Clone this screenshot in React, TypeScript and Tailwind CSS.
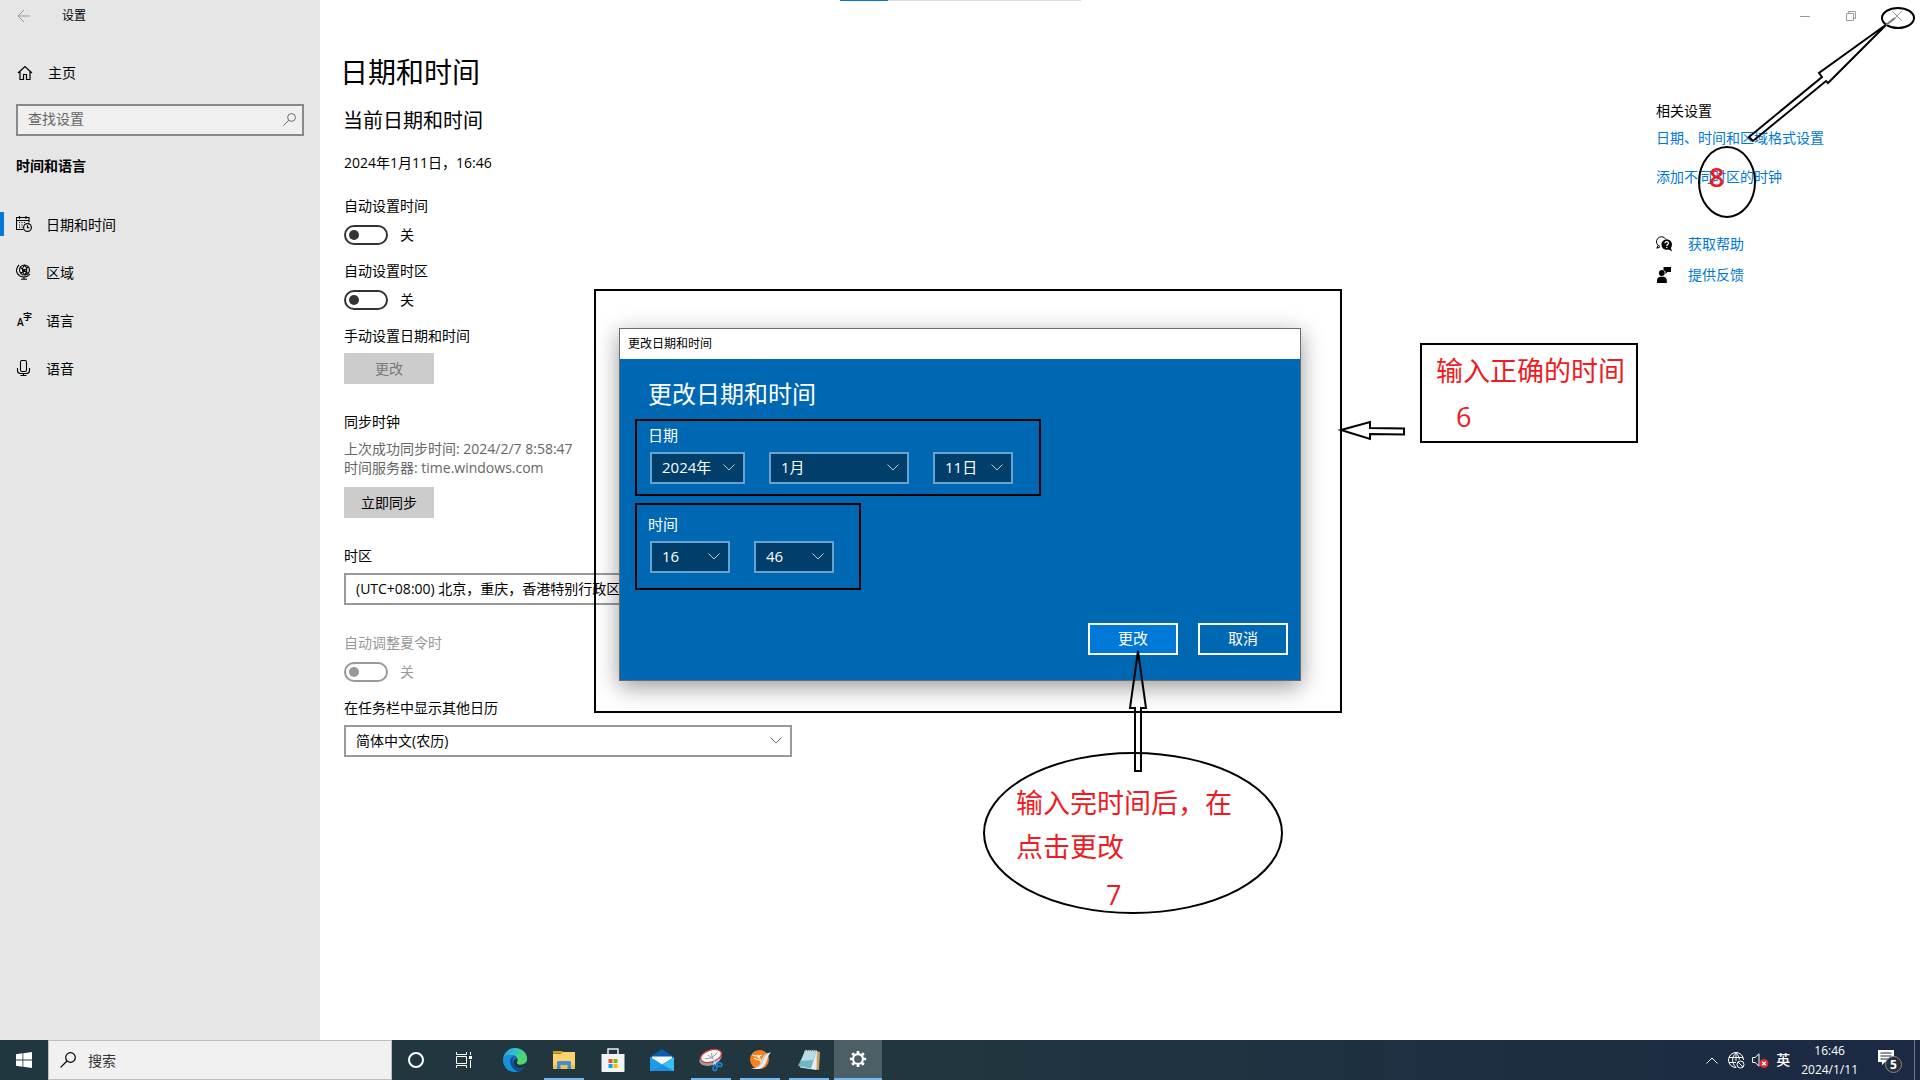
import type { ReactNode } from 'react'

interface IconProps {
  className?: string
}

const navItems = [
  { label: '日期和时间', icon: CalendarClockIcon, active: true },
  { label: '区域', icon: GlobeStandIcon, active: false },
  { label: '语言', icon: LanguageIcon, active: false },
  { label: '语音', icon: MicIcon, active: false },
]

const taskbarApps = [
  { name: 'Microsoft Edge', icon: EdgeIcon, open: false },
  { name: '文件资源管理器', icon: ExplorerIcon, open: true },
  { name: 'Microsoft Store', icon: StoreIcon, open: false },
  { name: '邮件', icon: MailIcon, open: false },
  { name: '截图工具', icon: SnipIcon, open: true },
  { name: '浏览器', icon: BirdIcon, open: true },
  { name: '记事本', icon: NotepadIcon, open: true },
]

/* Settings icons */

function BackIcon({ className }: IconProps) {
  return (
    <svg className={className} viewBox="0 0 14 14" fill="none" stroke="currentColor">
      <path d="M7 1 1 7l6 6M1 7h12" />
    </svg>
  )
}

function HomeIcon({ className }: IconProps) {
  return (
    <svg className={className} viewBox="0 0 16 16" fill="none" stroke="currentColor" strokeWidth="1.2">
      <path d="M1 8 8 1.5 15 8M3 6.5v8h3.5V9.5h3v5H13v-8" />
    </svg>
  )
}

function SearchIcon({ className }: IconProps) {
  return (
    <svg className={className} viewBox="0 0 16 16" fill="none" stroke="currentColor" strokeWidth="1.2">
      <circle cx="10.5" cy="5.5" r="4.8" />
      <path d="M7 9 .6 15.4" />
    </svg>
  )
}

function CalendarClockIcon({ className }: IconProps) {
  return (
    <svg className={className} viewBox="0 0 16 16" fill="none" stroke="currentColor" strokeWidth="1.1">
      <path d="M7.5 13.5h-7v-12h12.5v5M.5 4.5h12.5M3.5 0v3M10 0v3" />
      <path d="M3 6.5h1M5.5 6.5h1M8 6.5h1M3 9h1M5.5 9h1M3 11.3h1M5.5 11.3h1" />
      <circle cx="11.5" cy="11.5" r="3.9" />
      <path d="M11.5 9.2v2.5h2" />
    </svg>
  )
}

function GlobeStandIcon({ className }: IconProps) {
  return (
    <svg className={className} viewBox="0 0 16 16" fill="none" stroke="currentColor" strokeWidth="1.1">
      <circle cx="8.5" cy="6" r="5" />
      <path d="M4.500 3.500 12 9.500M5 9l7-6M8.500 1.200C5.500 4 6 9 9 10.800M8.500 1.200c3 2.500 3 7 .5 9.600" />
      <path d="M3 .8C-.6 5-.3 9 3.500 11.800c3.500 2 7.500 1.500 10.500-1.600M8 13v2M5 15.300h6" />
    </svg>
  )
}

function LanguageIcon({ className }: IconProps) {
  return (
    <svg className={className} viewBox="0 0 16 16" fill="currentColor">
      <text x="1" y="14" fontSize="10" fontWeight="600" fontFamily="Open Sans">A</text>
      <text x="7" y="8" fontSize="9" fontWeight="700" fontFamily="Noto Sans CJK SC">字</text>
    </svg>
  )
}

function MicIcon({ className }: IconProps) {
  return (
    <svg className={className} viewBox="0 0 16 16" fill="none" stroke="currentColor" strokeWidth="1.1">
      <rect x="4.5" y=".5" width="6" height="11" rx="1.5" />
      <path d="M1.5 8v2.5c0 2 1.500 3 3 3h6c1.500 0 3-1 3-3V8M7.500 13.500v2M4.500 15.500h6" />
    </svg>
  )
}

function HelpIcon({ className }: IconProps) {
  return (
    <svg className={className} viewBox="0 0 16 16">
      <path d="M2 9.500.8 12.200l3-1M4 10.500A5 5 0 1 1 9.800 3.200" fill="none" stroke="black" />
      <circle cx="10.700" cy="8.500" r="5.300" />
      <path d="m12 13 4 2.500-1.500-4.500z" />
      <path d="M9 7.300c0-2.300 3.500-2.200 3.500 0 0 1.300-1.700 1.200-1.700 2.600M10.800 10.800v1.200" fill="none" stroke="white" strokeWidth="1.2" />
    </svg>
  )
}

function FeedbackIcon({ className }: IconProps) {
  return (
    <svg className={className} viewBox="0 0 16 16">
      <circle cx="5.8" cy="6" r="2.9" />
      <path d="M1 16v-2.500C1 11 2.500 9.700 4.500 9.700h2.800c2 0 3.500 1.300 3.500 3.800V16zM7.500 0H15v5h-3.500L9.500 7V4.500L7.500 3z" />
    </svg>
  )
}

function ChevronDown({ className }: IconProps) {
  return (
    <svg className={className} viewBox="0 0 12 7" fill="none" stroke="currentColor">
      <path d="m.5.5 5.500 5.500L11.500.5" />
    </svg>
  )
}

/* Taskbar icons */

function WindowsIcon({ className }: IconProps) {
  return (
    <svg className={className} viewBox="0 0 16 16" fill="white">
      <path d="M0 2.200 6.500 1.300v6.300H0zM7.300 1.200 16 0v7.600H7.300zM0 8.400h6.500v6.300L0 13.800zM7.300 8.400H16V16l-8.700-1.200z" />
    </svg>
  )
}

function TaskViewIcon({ className }: IconProps) {
  return (
    <svg className={className} viewBox="0 0 16 16" fill="none" stroke="white">
      <path d="M.5 4.500h10v7H.5zM.5 0v2.500h10V0M.5 16v-2.500h10V16M14.500 0v3M14.500 8v8" />
      <path d="M13 4h3v3h-3z" fill="white" stroke="none" />
    </svg>
  )
}

function EdgeIcon({ className }: IconProps) {
  return (
    <svg className={className} viewBox="0 0 24 24">
      <defs>
        <linearGradient id="edge-top" x1="0" y1="0.5" x2="1" y2="0.6">
          <stop offset="0" stopColor="#2aa5e0" />
          <stop offset=".5" stopColor="#2fc3c4" />
          <stop offset="1" stopColor="#5cd957" />
        </linearGradient>
      </defs>
      <circle cx="12" cy="12" r="12" fill="#1273c4" />
      <path d="M.3 10C1.500 4 6.500 0 12 0c7 0 12 5.200 12 10.500 0 3.700-3 6-6.200 6-2.600 0-4-1-4-1.800 0-.8 1-1 1-3C14.800 9 12 7 8.500 7 4.500 7 1.500 8.500.3 10z" fill="url(#edge-top)" />
      <path d="M.3 10C2 8 5 7 8.500 7c1.500 0 2.800.3 3.800.9C8 8 6.500 12 7.500 15.500 8.500 19.500 12 22.500 15.500 23.500 6 26-1 18.500.3 10z" fill="#1b8fd8" />
      <path d="M12.300 7.900c-3 1.600-3.600 5.300-2 8.600 2 4 7 5.500 12 2.200-1.500 2.800-4 4.500-6.800 4.900-4-1-7-4-8-8C6.600 12 8 8 12.300 7.900z" fill="#0c4f96" />
      <path d="M14.800 11.700c0 2-1 2.200-1 3 0 .8 1.400 1.800 4 1.800 2.600 0 4.800-1.300 5.700-3.400L24 19l-3 .5c-5 2-9.500.5-10.500-4-.5-3 1.500-5.500 3.500-5.300z" fill="#213740" />
      <path d="M14.800 11.700c0 2-1 2.200-1 3 0 .8 1.400 1.800 4 1.800 2.600 0 4.800-1.300 5.700-3.400.7-2 .5-4-.2-5.600l-6-1-4 1.700c1 .8 1.500 2 1.500 3.500z" fill="#4fd673" />
    </svg>
  )
}

function ExplorerIcon({ className }: IconProps) {
  return (
    <svg className={className} viewBox="0 0 24 24">
      <path d="M1 3h9l1.500 2H1z" fill="#d99b12" />
      <path d="M1 5.500h8L11 4h12v17H1z" fill="#fdd36b" />
      <path d="M1 17h22v4H1z" fill="#f5bf45" />
      <path d="M5 21v-7l1-1h12l1 1v7h-3.500v-4h-7v4z" fill="#3f8fd6" />
    </svg>
  )
}

function StoreIcon({ className }: IconProps) {
  return (
    <svg className={className} viewBox="0 0 24 24">
      <path d="M7 7V1h10v6" fill="none" stroke="#eeeeee" strokeWidth="1.5" />
      <path d="M.5 6h23v17a1 1 0 0 1-1 1h-21a1 1 0 0 1-1-1z" fill="#f3f3f3" />
      <path d="M7.500 11h4v4h-4z" fill="#f25022" />
      <path d="M12.500 11h4v4h-4z" fill="#7fba00" />
      <path d="M7.500 16h4v4h-4z" fill="#00a4ef" />
      <path d="M12.500 16h4v4h-4z" fill="#ffb900" />
    </svg>
  )
}

function MailIcon({ className }: IconProps) {
  return (
    <svg className={className} viewBox="0 0 24 24">
      <path d="M0 9 12 1l12 8v4H0z" fill="#0a5cae" />
      <path d="M2 8.500h20v6l-10 4-10-4z" fill="#f4f6f8" />
      <path d="M0 9v14h24V9l-12 7.500z" fill="#2fb5f3" />
      <path d="M0 9v14h1L12 16.500z" fill="#1d9be6" />
      <path d="M24 23H1l11-6.500L24 9z" fill="#35bff5" />
      <path d="m12 16.500 12 6.500H1z" fill="#1c8fe0" />
    </svg>
  )
}

function SnipIcon({ className }: IconProps) {
  return (
    <svg className={className} viewBox="0 0 24 24">
      <ellipse cx="11.500" cy="10.500" rx="11.500" ry="6.800" fill="#9b9fa3" transform="rotate(-18 11.500 10.500)" />
      <ellipse cx="12" cy="8" rx="10.800" ry="6" fill="#f7f7f7" stroke="#d8343c" strokeWidth="1.3" transform="rotate(-18 12 8)" />
      <path d="M6 10.500c4 1 10-2 12-6M9 7l5 4M12.500 5l1 6" fill="none" stroke="#8c9094" strokeWidth=".9" />
      <path d="m14 10 3 7M20.500 11 14 16.500" fill="none" stroke="#c5d5df" strokeWidth="1.3" />
      <ellipse cx="16" cy="20" rx="1.900" ry="2.600" fill="none" stroke="#1f7fc4" strokeWidth="1.8" transform="rotate(20 16 20)" />
      <ellipse cx="20.500" cy="16.500" rx="2.500" ry="1.800" fill="none" stroke="#1f7fc4" strokeWidth="1.8" transform="rotate(20 20.500 16.500)" />
    </svg>
  )
}

function BirdIcon({ className }: IconProps) {
  return (
    <svg className={className} viewBox="0 0 24 24">
      <circle cx="11.5" cy="11.5" r="9.5" fill="#f5821f" />
      <path d="M3 20c5 .5 8-1 9.500-5C14 10 16 5 23 4.500c-2 1.500-2.500 3-3.500 6-1.500 5.500-4 10-9.500 10.500-2.500.3-5-.2-7-1z" fill="#ececec" />
      <path d="M8 19c4-1 6-4 7-7 1-3 2.500-5 5-6.500" fill="none" stroke="#b9b9b9" strokeWidth="1" />
      <path d="M4.500 7c3 1.500 5.500 1 8 .5-1 1-2 1.500-3 1.500 2 .5 3 2 3 4-2-2-5-1.500-6.500-3" fill="none" stroke="#fff0e0" strokeWidth="1.2" />
    </svg>
  )
}

function NotepadIcon({ className }: IconProps) {
  return (
    <svg className={className} viewBox="0 0 24 24">
      <path d="m20 3 3 1-1 18-4-1z" fill="#c8a35a" />
      <path d="m8 2 12 .5L19.500 22 3 19.500z" fill="#e4eef0" />
      <path d="M8 3h11.500L14 20.500 1 18z" fill="#6fb7c4" />
      <path d="M8 3h11.500l-3.500 9L4 13z" fill="#b5dde3" />
      <path d="M8 2.500h12" stroke="#7b7b7b" strokeWidth="1.5" strokeDasharray="1 1" />
    </svg>
  )
}

function GearIcon({ className }: IconProps) {
  return (
    <svg className={className} viewBox="0 0 20 20" fill="none" stroke="white">
      <circle cx="10" cy="10" r="5.5" strokeWidth="2.4" />
      <path
        d="M10 1v3M10 16v3M1 10h3M16 10h3M3.600 3.600l2.200 2.200M14.200 14.200l2.200 2.200M3.600 16.400l2.200-2.200M14.200 5.800l2.200-2.200"
        strokeWidth="3"
      />
    </svg>
  )
}

function NetworkIcon({ className }: IconProps) {
  return (
    <svg className={className} viewBox="0 0 17 17" fill="none" stroke="white">
      <path d="M8 15.500A7.500 7.500 0 1 1 15.500 8M8 15.500C3.500 11 3.500 5 8 .5c2 2 3.200 4.500 3.300 7M1.200 5.500h13.600M1.200 10.500H8M8 .5V9" />
      <circle cx="12.5" cy="12.5" r="3.5" />
      <path d="m10 10 5 5" />
    </svg>
  )
}

function MutedIcon({ className }: IconProps) {
  return (
    <svg className={className} viewBox="0 0 17 16">
      <path d="M.6 5.500h2.500L7 1.800v12.400l-3.900-3.700H.6z" fill="none" stroke="white" />
      <circle cx="12" cy="11.5" r="4.5" fill="#e02a35" />
      <path d="m10.200 9.700 3.600 3.600M13.800 9.700l-3.600 3.600" stroke="white" strokeWidth="1.3" />
    </svg>
  )
}

function Toggle({ label, disabled }: { label: string; disabled?: boolean }) {
  return (
    <div className={disabled ? 'text-[#999999]' : 'text-black'}>
      <label htmlFor={label} className="block leading-5">{label}</label>
      <div className="mt-[9px] flex h-5 items-center gap-3">
        <input
          id={label}
          type="checkbox"
          role="switch"
          disabled={disabled}
          className="flex h-5 w-11 appearance-none items-center rounded-full border-2 border-[#333333] pl-[3px] before:size-2.5 before:rounded-full before:bg-[#333333] disabled:border-[#999999] disabled:before:bg-[#999999]"
        />
        <span className="leading-5">关</span>
      </div>
    </div>
  )
}

function SettingSelect({ label, value }: { label: string; value: string }) {
  return (
    <div>
      <label htmlFor={label} className="block leading-5">{label}</label>
      <div className="relative mt-[7px] w-full max-w-[448px]">
        <select id={label} className="h-8 w-full appearance-none border-2 border-[#999999] bg-white pl-[10px] text-sm">
          <option>{value}</option>
        </select>
        <ChevronDown className="pointer-events-none absolute top-3 right-[10px] h-[7px] w-3 text-[#666666]" />
      </div>
    </div>
  )
}

function DialogSelect({ label, value, className }: { label: string; value: string; className: string }) {
  return (
    <div className={`relative ${className}`}>
      <select
        aria-label={label}
        className="h-8 w-full appearance-none border-2 border-[#66a3d1] bg-[#003e6b] pl-[10px] text-[15px] text-white"
      >
        <option>{value}</option>
      </select>
      <ChevronDown className="pointer-events-none absolute top-3 right-[10px] h-[7px] w-3 text-[#b8cbd9]" />
    </div>
  )
}

function RelatedLink({ children }: { children: ReactNode }) {
  return <a href="#" className="leading-5 text-[#0078d7]">{children}</a>
}

function Sidebar() {
  return (
    <aside className="w-80 shrink-0 bg-[#e6e6e6]">
      <header className="flex h-8 items-center pl-[17px]">
        <button aria-label="返回" className="text-[#999999]">
          <BackIcon className="size-[14px]" />
        </button>
        <span className="ml-[31px] text-xs">设置</span>
      </header>
      <a href="#" className="mt-[21px] flex h-10 items-center pl-[17px]">
        <HomeIcon className="size-4" />
        <span className="ml-[15px]">主页</span>
      </a>
      <div className="relative mx-4 mt-[11px]">
        <input
          type="text"
          aria-label="查找设置"
          placeholder="查找设置"
          className="h-8 w-full border-2 border-[#8a8a8a] bg-[#f0f0f0] pb-[3px] pl-[10px] text-sm placeholder:text-[#666666]"
        />
        <SearchIcon className="absolute top-[9px] right-2 size-[13px] text-[#666666]" />
      </div>
      <h2 className="mt-[14px] pl-4 leading-8 font-bold">时间和语言</h2>
      <nav className="mt-[18px]">
        {navItems.map((item) => (
          <a
            key={item.label}
            href="#"
            className="flex h-12 items-center"
          >
            <span className={item.active ? 'h-6 w-1 bg-[#0078d7]' : 'h-6 w-1'} />
            <item.icon className="ml-3 size-4" />
            <span className="ml-[14px] pt-px">{item.label}</span>
          </a>
        ))}
      </nav>
    </aside>
  )
}

function Dialog() {
  return (
    <section
      role="dialog"
      aria-label="更改日期和时间"
      className="flex h-[353px] w-[682px] flex-col border border-[#6b6b6b] bg-[#0067b3] text-white shadow-[0_6px_22px_rgba(0,0,0,0.4)]"
    >
      <header className="h-[30px] bg-white pl-2 text-xs leading-[30px] text-black">更改日期和时间</header>
      <h2 className="mt-[17px] ml-7 text-2xl leading-9">更改日期和时间</h2>
      <div className="mt-[7px] ml-[15px] flex h-[77px] w-[406px] flex-col border-2 border-black pt-1 pl-3 text-[15px]">
        <span className="-ml-px leading-5">日期</span>
        <div className="mt-[7px] ml-px flex gap-6">
          <DialogSelect label="年" value="2024年" className="w-[95px]" />
          <DialogSelect label="月" value="1月" className="w-[140px]" />
          <DialogSelect label="日" value="11日" className="w-20" />
        </div>
      </div>
      <div className="mt-[7px] ml-[15px] flex h-[87px] w-[226px] flex-col border-2 border-black pt-[9px] pl-3 text-[15px]">
        <span className="-ml-px leading-5">时间</span>
        <div className="mt-[7px] ml-px flex gap-6">
          <DialogSelect label="时" value="16" className="w-20" />
          <DialogSelect label="分" value="46" className="w-20" />
        </div>
      </div>
      <div className="mt-auto mr-3 mb-[25px] flex justify-end gap-5 text-[15px]">
        <button className="h-8 w-[90px] border-2 border-white bg-[#0078d7]">更改</button>
        <button className="h-8 w-[90px] border-2 border-white">取消</button>
      </div>
    </section>
  )
}

// Tutorial marks drawn over the desktop
function Annotations() {
  return (
    <div className="pointer-events-none absolute inset-0 text-[27px] text-[#ed1c24]">
      <svg className="absolute top-0 left-0 size-full" fill="none" stroke="black" strokeWidth="2">
        <rect x="595" y="290" width="746" height="422" />
        <path d="m1341 430 29-8v6l34 .5v6l-34-.5v5z" />
        <path d="m1138 651 8 57h-5v63h-6v-63h-5z" />
        <ellipse cx="1133" cy="833" rx="149" ry="80" />
        <ellipse cx="1898" cy="18" rx="16" ry="10" />
        <path d="M1887 24 1819 73l3 4-73 60 4 4 73-60 2 2z" />
        <path d="m1886 25 9-7" stroke="#777777" />
        <ellipse cx="1727" cy="182" rx="28" ry="35" />
      </svg>
      <div className="absolute top-[343px] left-[1420px] h-[100px] w-[218px] border-2 border-black pl-[14px]">
        <p className="leading-[52px] whitespace-nowrap">输入正确的时间</p>
        <p className="pl-5 leading-10">6</p>
      </div>
      <div className="absolute top-[781px] left-[1016px] w-[230px] leading-[44px]">
        <p>输入完时间后，在</p>
        <p>点击更改</p>
        <p className="pt-1 pl-[90px]">7</p>
      </div>
      <p className="absolute top-[155px] left-[1709px] leading-[44px] font-semibold">8</p>
    </div>
  )
}

function Taskbar() {
  return (
    <footer className="flex h-10 shrink-0 bg-linear-to-r from-[#213740] via-[#21363f] to-[#1b2943] text-white">
      <button aria-label="开始" className="flex w-12 items-center justify-center">
        <WindowsIcon className="size-4" />
      </button>
      <label className="flex w-[344px] items-center border border-[#bfbfbf] bg-[#f1f1f1] pl-[11px] text-black">
        <SearchIcon className="size-4" />
        <input
          type="text"
          placeholder="搜索"
          aria-label="搜索"
          className="ml-3 min-w-0 flex-1 bg-transparent pt-0.5 text-sm placeholder:text-[#333333]"
        />
      </label>
      <button aria-label="Cortana" className="flex w-12 items-center justify-center">
        <span className="size-4 rounded-full border-2 border-white" />
      </button>
      <button aria-label="任务视图" className="flex w-12 items-center justify-center">
        <TaskViewIcon className="size-4" />
      </button>
      <div className="ml-[3px] flex gap-px">
        {taskbarApps.map((app) => (
          <button key={app.name} aria-label={app.name} className="relative flex w-12 items-center justify-center">
            <app.icon className="size-6" />
            {app.open && <span className="absolute inset-x-1 bottom-0 h-0.5 bg-[#76b9ed]" />}
          </button>
        ))}
        <button aria-label="设置" className="flex w-12 items-center justify-center border-b-2 border-[#76b9ed] bg-[#4d5f66]">
          <GearIcon className="size-[18px]" />
        </button>
      </div>
      <div className="ml-auto flex items-center">
        <ChevronDown className="h-[7px] w-3 rotate-180" />
        <NetworkIcon className="ml-[10px] size-[17px]" />
        <MutedIcon className="ml-[7px] h-4 w-[17px]" />
        <span className="ml-[7px] text-sm font-medium">英</span>
        <div className="ml-[11px] text-center text-xs leading-[19px]">
          <p>16:46</p>
          <p>2024/1/11</p>
        </div>
        <button aria-label="通知" className="relative ml-5 h-6 w-6">
          <svg className="size-6" viewBox="0 0 24 24">
            <path d="M0 2h16v12H7l-3 3v-3H0z" fill="white" />
            <path d="M2.500 5h11M2.500 8h11M2.500 11h8" stroke="#1b2943" />
          </svg>
          <span className="absolute top-2 left-[7px] size-[17px] rounded-full border border-[#888888] bg-[#2b2f38] text-center text-xs leading-[15px] font-bold">5</span>
        </button>
        <span className="ml-3 h-10 w-px bg-[#6d7687]" />
        <span className="w-[5px]" />
      </div>
    </footer>
  )
}

export default function App() {
  return (
    <div className="relative flex h-screen flex-col overflow-hidden bg-white font-['Open_Sans','Noto_Sans_CJK_SC',sans-serif] text-sm text-black">
      <div className="flex min-h-0 flex-1">
        <Sidebar />
        <div className="flex flex-1 flex-col">
          <header className="flex h-8 items-center justify-end gap-9 pr-[18px] text-[#999999]">
            <button aria-label="最小化">
              <svg className="size-[10px]" viewBox="0 0 10 10" stroke="currentColor"><path d="M0 5.500h10" /></svg>
            </button>
            <button aria-label="还原">
              <svg className="size-[10px]" viewBox="0 0 10 10" fill="none" stroke="currentColor">
                <path d="M.5 2.500h7v7h-7zM2.500 2.500v-2h7v7h-2" />
              </svg>
            </button>
            <button aria-label="关闭">
              <svg className="size-[10px]" viewBox="0 0 10 10" stroke="currentColor"><path d="m0 0 10 10M10 0 0 10" /></svg>
            </button>
          </header>
          <div className="flex flex-1 justify-between pl-6">
            <main className="w-[448px] pt-[22px]">
              <h1 className="-ml-1 text-[28px] leading-9">日期和时间</h1>
              <h2 className="mt-[17px] -ml-px text-xl leading-7">当前日期和时间</h2>
              <p className="mt-[18px] mb-[23px] leading-5">2024年1月11日，16:46</p>
              <div className="flex flex-col gap-4">
                <Toggle label="自动设置时间" />
                <Toggle label="自动设置时区" />
                <div>
                  <p className="leading-5">手动设置日期和时间</p>
                  <button disabled className="mt-[7px] h-[31px] w-[90px] bg-[#cccccc] text-[#7a7a7a]">更改</button>
                </div>
              </div>
              <section className="mt-7">
                <h3 className="leading-5">同步时钟</h3>
                <p className="mt-[7px] mb-[10px] leading-[19px] text-[#666666]">
                  上次成功同步时间: 2024/2/7 8:58:47
                  <br />
                  时间服务器: time.windows.com
                </p>
                <button className="h-[31px] w-[90px] bg-[#cccccc]">立即同步</button>
              </section>
              <div className="mt-7 flex flex-col gap-7">
                <SettingSelect label="时区" value="(UTC+08:00) 北京，重庆，香港特别行政区，乌鲁木齐" />
                <div className="flex flex-col gap-4">
                  <Toggle label="自动调整夏令时" disabled />
                  <SettingSelect label="在任务栏中显示其他日历" value="简体中文(农历)" />
                </div>
              </div>
            </main>
            <aside className="flex w-[264px] flex-col items-start pt-[69px]">
              <h3 className="leading-5">相关设置</h3>
              <div className="mt-[7px] flex flex-col gap-[19px]">
                <RelatedLink>日期、时间和区域格式设置</RelatedLink>
                <RelatedLink>添加不同时区的时钟</RelatedLink>
              </div>
              <div className="mt-[47px] flex items-center gap-4">
                <HelpIcon className="size-4" />
                <RelatedLink>获取帮助</RelatedLink>
              </div>
              <div className="mt-[11px] flex items-center gap-4">
                <FeedbackIcon className="size-4" />
                <RelatedLink>提供反馈</RelatedLink>
              </div>
            </aside>
          </div>
        </div>
      </div>
      <Taskbar />

      {/* Sharing bar at the top edge of the screen */}
      <div className="absolute top-0 left-[840px] flex h-px w-[241px] bg-[#dddddd]">
        <span className="h-px w-12 bg-[#0078d7]" />
      </div>

      <div className="absolute inset-x-0 top-[328px] flex justify-center">
        <Dialog />
      </div>
      <Annotations />
    </div>
  )
}
